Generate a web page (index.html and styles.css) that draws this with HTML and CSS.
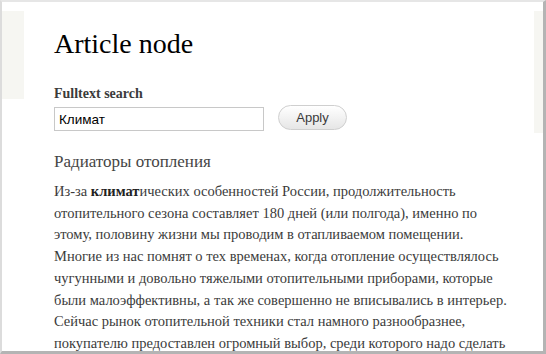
FILE: index.html
```html
<!DOCTYPE html>
<html lang="en">
<head>
    <meta charset="UTF-8">
    <meta name="viewport" content="width=device-width, initial-scale=1.0">
    <title>Article node</title>
    <link rel="stylesheet" href="styles.css">
</head>
<body>
    <div class="frame">
        <div class="side side-left"></div>
        <div class="main">
            <h1 class="title">Article node</h1>
            <form class="search">
                <label class="search-label" for="q">Fulltext search</label>
                <div class="search-row">
                    <input class="search-input" id="q" type="text" value="Климат">
                    <button class="search-button" type="button">Apply</button>
                </div>
            </form>
            <div class="result">
                <h2 class="result-title">Радиаторы отопления</h2>
                <p class="result-text">Из-за <strong>климат</strong>ических особенностей России, продолжительность отопительного сезона составляет 180 дней (или полгода), именно по этому, половину жизни мы проводим в отапливаемом помещении. Многие из нас помнят о тех временах, когда отопление осуществлялось чугунными и довольно тяжелыми отопительными приборами, которые были малоэффективны, а так же совершенно не вписывались в интерьер. Сейчас рынок отопительной техники стал намного разнообразнее, покупателю предоставлен огромный выбор, среди которого надо сделать правильный.</p>
            </div>
        </div>
        <div class="side side-right"></div>
    </div>
</body>
</html>
```

FILE: styles.css
```css
html, body {
    margin: 0;
    padding: 0;
    height: 100%;
    overflow: hidden;
}

body {
    background: #ffffff;
    font-family: "Liberation Serif", "Times New Roman", serif;
}

.frame {
    box-sizing: border-box;
    height: 354px;
    border-top: 2px solid #e6e6e6;
    border-left: 2px solid #dcdcdc;
    border-right: 3px solid #b4b4b4;
    border-bottom: 3px solid #b4b4b4;
    display: flex;
    align-items: flex-start;
    overflow: hidden;
}

.side {
    background: #f6f6f2;
    margin-top: 9px;
    flex: none;
}

.side-left {
    width: 22px;
    height: 88px;
}

.side-right {
    width: 9px;
    height: 122px;
}

.main {
    flex: 1;
    min-width: 0;
    padding: 0 26px 0 30px;
}

.title {
    margin: 24px 0 0;
    font-size: 28px;
    font-weight: normal;
    line-height: 36px;
    color: #000;
}

.search {
    margin-top: 23px;
}

.search-label {
    display: block;
    font-weight: bold;
    font-size: 14px;
    color: #3b3b3b;
    line-height: 18px;
}

.search-row {
    display: flex;
    align-items: flex-start;
    margin-top: 2px;
}

.search-input {
    box-sizing: border-box;
    width: 210px;
    height: 24px;
    margin: 2px 0 0;
    padding: 0 4px;
    border: 1px solid #c8c8c8;
    font-family: "Liberation Sans", Arial, sans-serif;
    font-size: 13.5px;
    color: #000;
}

.search-button {
    box-sizing: border-box;
    width: 69px;
    height: 25px;
    margin-left: 14px;
    border: 1px solid #cfcfcf;
    border-radius: 13px;
    background: linear-gradient(#ffffff, #e6e6e6);
    font-family: "Liberation Sans", Arial, sans-serif;
    font-size: 13px;
    color: #3a3a3a;
    padding: 0;
}

.result-title {
    margin: 20px 0 0;
    font-size: 17px;
    font-weight: normal;
    line-height: 22px;
    color: #454545;
}

.result-text {
    margin: 8px 0 0;
    font-size: 14.5px;
    line-height: 21.7px;
    color: #3b3b3b;
}

.result-text strong {
    color: #222;
}
```
